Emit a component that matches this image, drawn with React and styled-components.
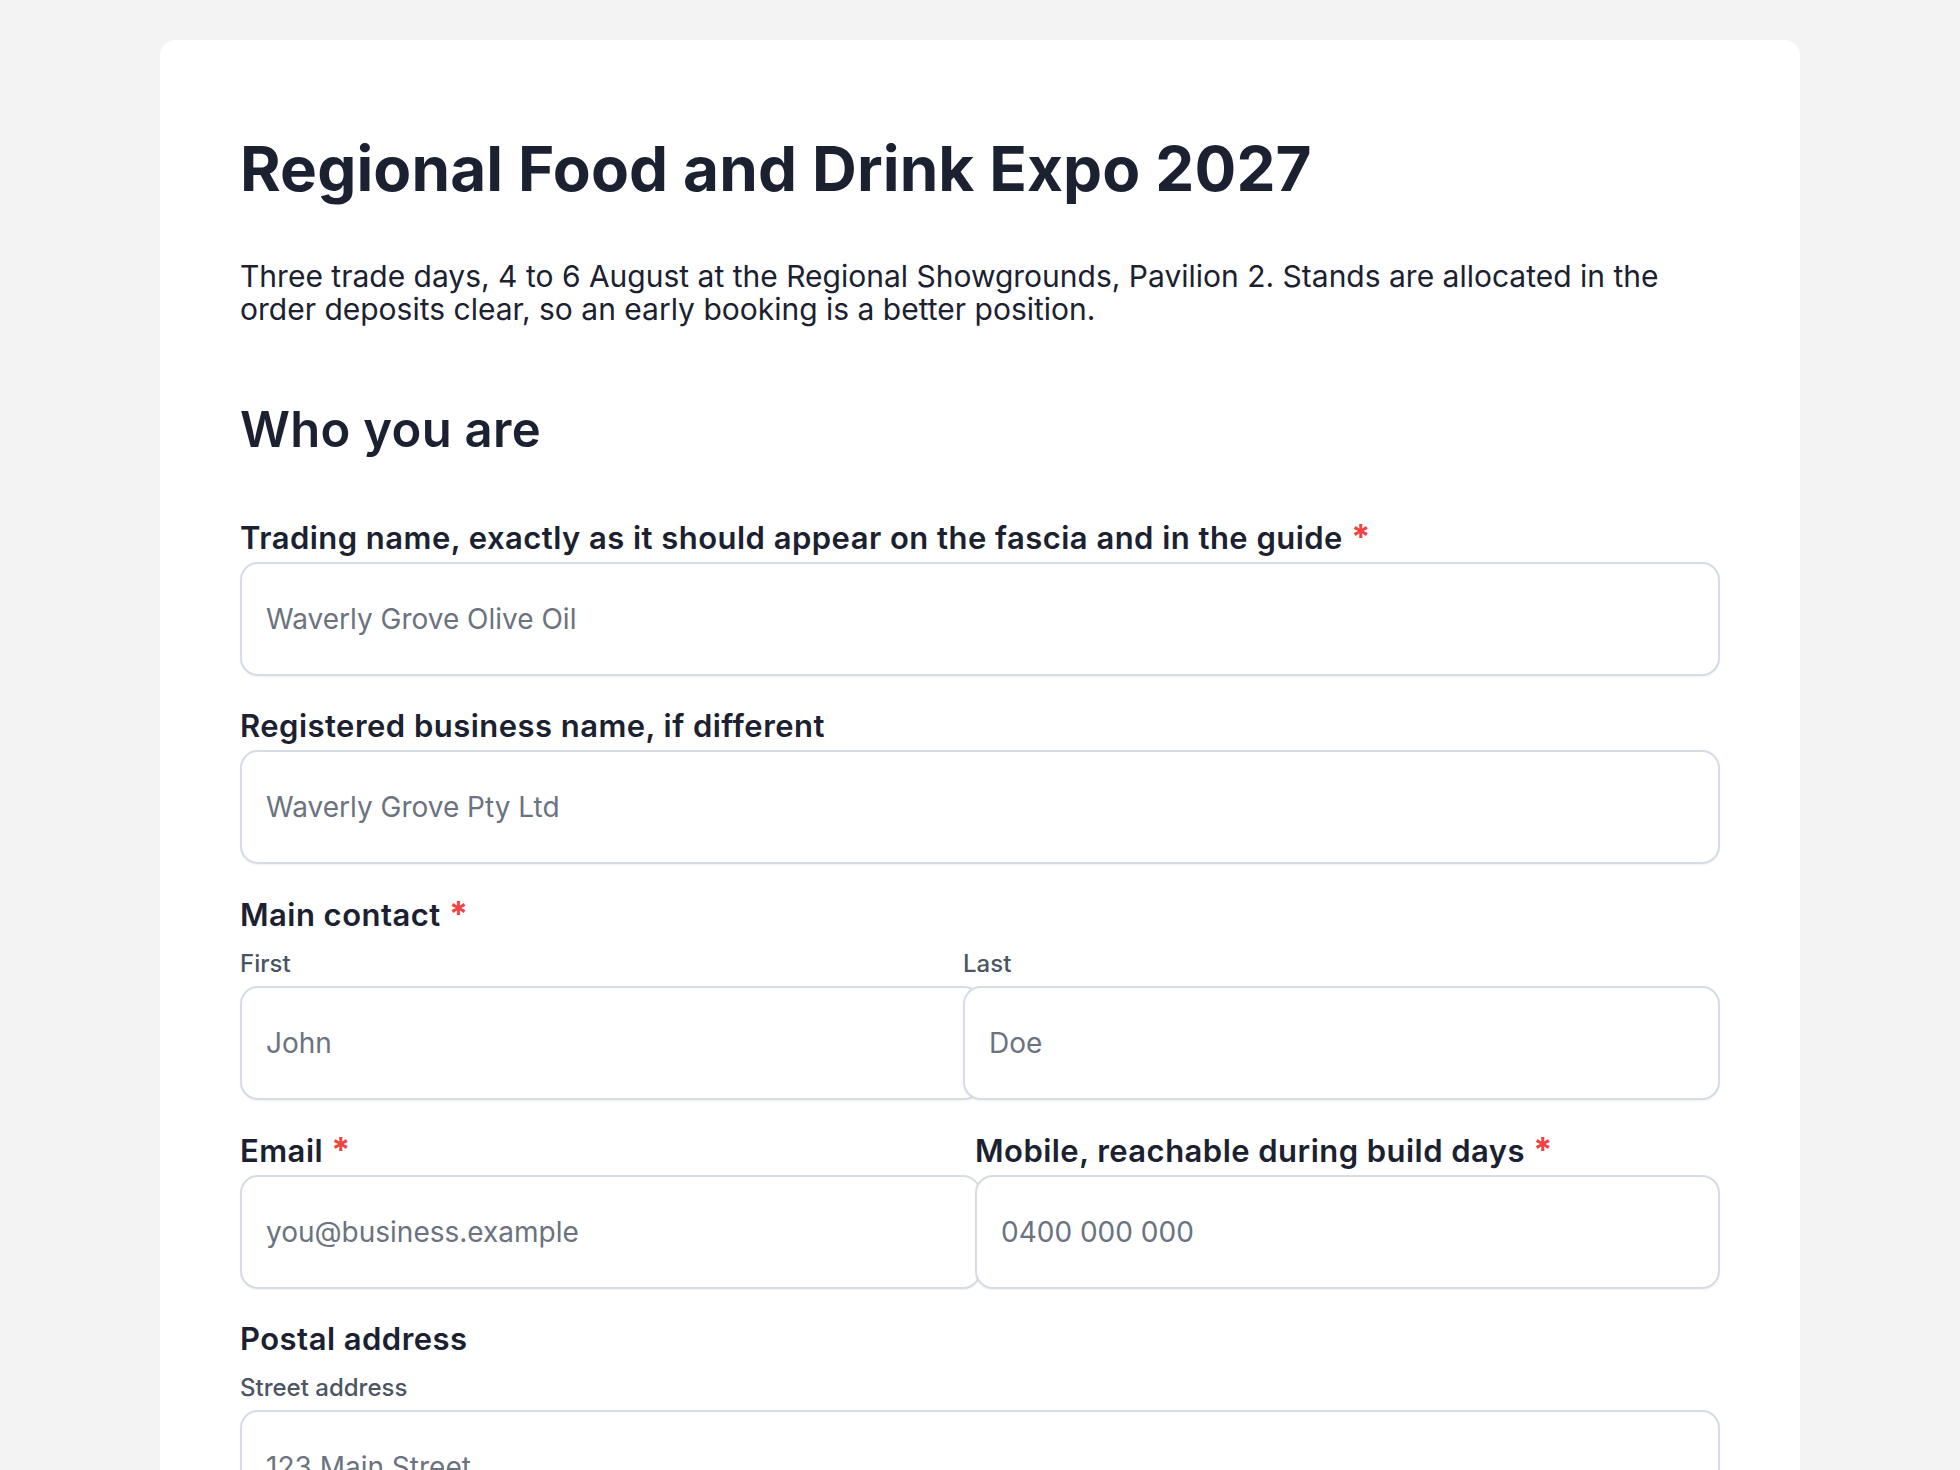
import styled, { createGlobalStyle } from "styled-components";

const GlobalStyle = createGlobalStyle`
  * {
    box-sizing: border-box;
  }
  body {
    margin: 0;
    background: #f3f3f3;
    font-family: Inter, "Noto Sans", sans-serif;
    color: #1b2130;
  }
`;

const Card = styled.main`
  max-width: 1640px;
  margin: 40px auto;
  background: #ffffff;
  border-radius: 16px;
  padding: 92px 80px 80px;
`;

const Title = styled.h1`
  margin: 0;
  font-size: 62px;
  line-height: 74px;
  font-weight: 700;
  letter-spacing: 0.002em;
  color: #1b2130;
`;

const Intro = styled.p`
  margin: 54px 0 0;
  font-size: 30px;
  line-height: 33px;
  color: #1b2130;
`;

const SectionTitle = styled.h2`
  margin: 77px 0 0;
  font-size: 49px;
  line-height: 54px;
  font-weight: 600;
  letter-spacing: 0.006em;
`;

const Fields = styled.div`
  display: flex;
  flex-direction: column;
  gap: 33px;
  margin-top: 63px;
`;

const Field = styled.div`
  display: flex;
  flex-direction: column;
  min-width: 0;
`;

const Label = styled.label`
  font-size: 31px;
  line-height: 34px;
  font-weight: 600;
  letter-spacing: 0.015em;
  margin-bottom: 7px;
`;

const Legend = styled.div`
  font-size: 31px;
  line-height: 34px;
  font-weight: 600;
  letter-spacing: 0.015em;
  margin-bottom: 18px;
`;

const SubLabel = styled.label`
  font-size: 24px;
  line-height: 28px;
  font-weight: 500;
  color: #4b5563;
  margin-bottom: 8px;
`;

const Req = styled.span`
  color: #ef4444;
  font-weight: 700;
  font-size: 1.1em;
`;

const Row = styled.div`
  display: grid;
  grid-template-columns: ${(p) => p.$split}px 1fr;
`;

const Input = styled.input`
  width: ${(p) => (p.$overflow ? `calc(100% + ${p.$overflow}px)` : "100%")};
  height: 114px;
  padding: 0 24px;
  border: 2px solid #d6dce6;
  border-radius: 18px;
  background: #ffffff;
  box-shadow: 0 1px 2px rgba(15, 23, 42, 0.06);
  font-family: Inter, "Noto Sans", sans-serif;
  font-size: 28px;
  color: #1b2130;
  outline: none;

  &::placeholder {
    color: #6b7280;
  }
`;

export default function App() {
  return (
    <>
      <GlobalStyle />
      <Card>
        <Title>Regional Food and Drink Expo 2027</Title>
        <Intro>
          Three trade days, 4 to 6 August at the Regional Showgrounds, Pavilion 2. Stands are
          allocated in the order deposits clear, so an early booking is a better position.
        </Intro>

        <SectionTitle>Who you are</SectionTitle>
        <Fields>
          <Field>
            <Label>
              Trading name, exactly as it should appear on the fascia and in the guide <Req>*</Req>
            </Label>
            <Input placeholder="Waverly Grove Olive Oil" />
          </Field>

          <Field>
            <Label>Registered business name, if different</Label>
            <Input placeholder="Waverly Grove Pty Ltd" />
          </Field>

          <Field>
            <Legend>
              Main contact <Req>*</Req>
            </Legend>
            <Row $split={723}>
              <Field>
                <SubLabel>First</SubLabel>
                <Input placeholder="John" $overflow={19} />
              </Field>
              <Field>
                <SubLabel>Last</SubLabel>
                <Input placeholder="Doe" />
              </Field>
            </Row>
          </Field>

          <Row $split={735}>
            <Field>
              <Label>
                Email <Req>*</Req>
              </Label>
              <Input placeholder="you@business.example" $overflow={6} />
            </Field>
            <Field>
              <Label>
                Mobile, reachable during build days <Req>*</Req>
              </Label>
              <Input placeholder="0400 000 000" />
            </Field>
          </Row>

          <Field>
            <Legend>Postal address</Legend>
            <SubLabel>Street address</SubLabel>
            <Input placeholder="123 Main Street" />
          </Field>

          <Row $split={723}>
            <Field>
              <SubLabel>Town or suburb</SubLabel>
              <Input placeholder="Waverly" $overflow={19} />
            </Field>
            <Field>
              <SubLabel>Postcode</SubLabel>
              <Input placeholder="2000" />
            </Field>
          </Row>
        </Fields>
      </Card>
    </>
  );
}
